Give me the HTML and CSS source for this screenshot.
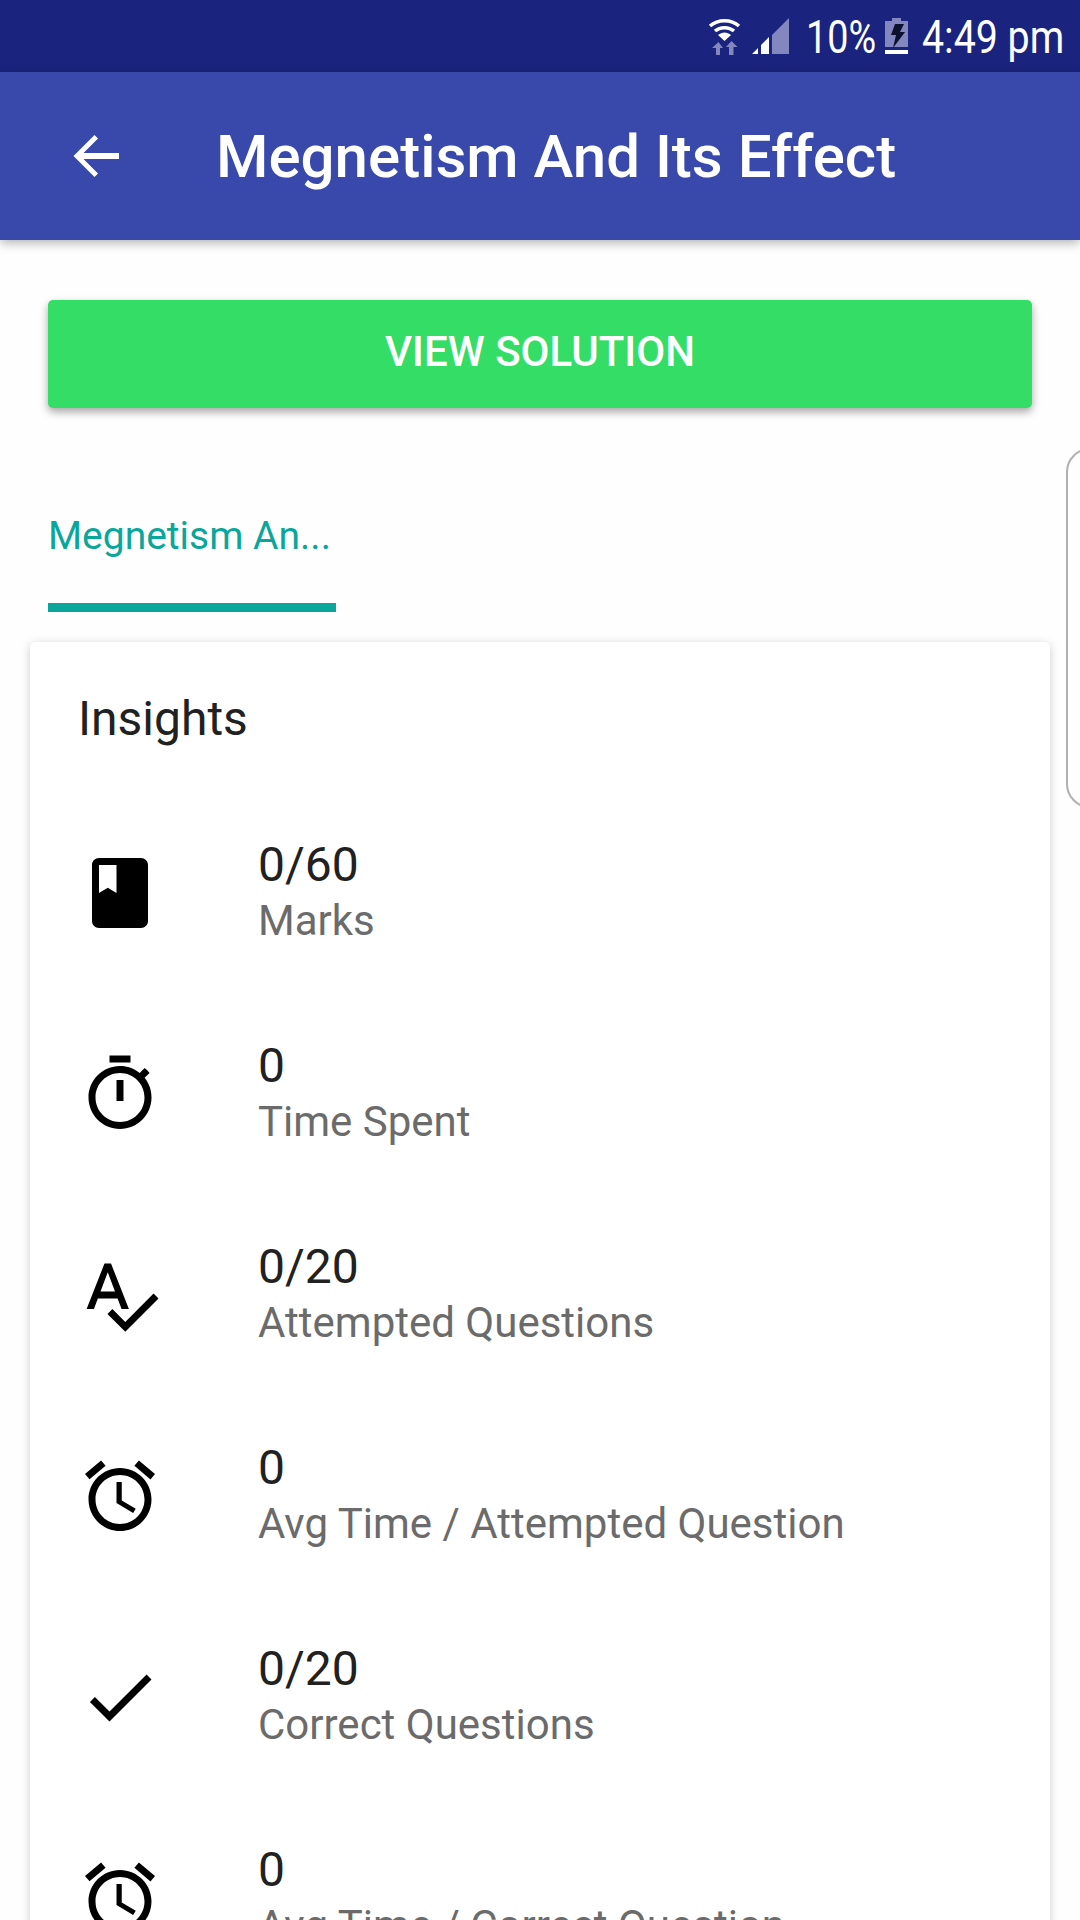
FILE: index.html
```html
<!DOCTYPE html>
<html lang="en">

<head>
    <meta charset="UTF-8">
    <meta name="viewport" content="width=device-width, initial-scale=1.0">
    <title>Megnetism And Its Effect</title>
    <link rel="stylesheet" href="styles.css">
</head>

<body>
    <div class="status-bar">
        <svg class="status-wifi" viewBox="0 0 33 37">
            <path class="arc" d="M2 8C10 1 23 1 31 8" />
            <path class="arc" d="M7 13C12 8.500 21 8.500 26 13" />
            <path class="on" d="M10 17C14 13.500 19 13.500 23 17L16.500 23z" />
            <path class="dim" d="M8 37v-7H4l6.500-6 0 0 4.500 6h-3v7zM21 37v-8h-3l5.500-6 6 6h-4v8z" />
        </svg>
        <svg class="status-signal" viewBox="0 0 37 36">
            <path class="dim" d="M20 36V17L37 0v36z" />
            <path class="on" d="M0 36l6-6v6zM9 36V27l8-8v17z" />
        </svg>
        <span class="status-text status-percent"><span>10%</span></span>
        <svg class="status-battery" viewBox="0 0 23 36">
            <path class="dim" d="M7 0h9v3h7v26H0V3h7z" />
            <path class="on" d="M0 32h23v4H0z" />
            <path class="bolt" d="M10 6h9l-4 8h5L8 30l3-13H6z" />
        </svg>
        <span class="status-text status-time"><span>4:49 pm</span></span>
    </div>

    <header class="app-bar">
        <svg class="back-icon" viewBox="0 0 48 48">
            <path d="M47 21H11.500L26 6.500 22.500 3 1.500 24l21 21 3.500-3.500L11.500 27H47z" />
        </svg>
        <h1>Megnetism And Its Effect</h1>
    </header>

    <main class="content">
        <button class="solution-btn" type="button">VIEW SOLUTION</button>

        <div class="tabs">
            <div class="tab">Megnetism An...</div>
        </div>
        <div class="next-card"></div>

        <section class="card">
            <h2>Insights</h2>

            <div class="row">
                <svg class="row-icon" viewBox="0 0 24 24">
                    <path d="M18 2H6c-1.100 0-2 .9-2 2v16c0 1.100.9 2 2 2h12c1.100 0 2-.9 2-2V4c0-1.100-.9-2-2-2zM6 4h5v8l-2.500-1.500L6 12V4z" />
                </svg>
                <div class="row-text">
                    <div class="row-value">0/60</div>
                    <div class="row-label">Marks</div>
                </div>
            </div>

            <div class="row">
                <svg class="row-icon" viewBox="0 0 24 24">
                    <path d="M15 1H9v2h6V1zm-4 13h2V8h-2v6zm8.030-6.610l1.420-1.420c-.43-.51-.9-.99-1.410-1.410l-1.420 1.420C16.070 4.740 14.120 4 12 4c-4.970 0-9 4.030-9 9s4.020 9 9 9 9-4.030 9-9c0-2.120-.74-4.070-1.970-5.610zM12 20c-3.870 0-7-3.130-7-7s3.130-7 7-7 7 3.130 7 7-3.130 7-7 7z" />
                </svg>
                <div class="row-text">
                    <div class="row-value">0</div>
                    <div class="row-label">Time Spent</div>
                </div>
            </div>

            <div class="row">
                <svg class="row-icon" viewBox="0 0 24 24">
                    <path d="M12.450 16h2.090L9.430 3H7.570L2.460 16h2.090l1.120-3h5.640l1.140 3zm-6.020-5L8.500 5.480 10.570 11H6.430zm15.160.59l-8.090 8.090L9.830 16l-1.410 1.410 5.090 5.090L23 13l-1.410-1.410z" />
                </svg>
                <div class="row-text">
                    <div class="row-value">0/20</div>
                    <div class="row-label">Attempted Questions</div>
                </div>
            </div>

            <div class="row">
                <svg class="row-icon" viewBox="0 0 24 24">
                    <path d="M22 5.720l-4.600-3.860-1.290 1.530 4.600 3.860L22 5.720zM7.880 3.390L6.600 1.860 2 5.710l1.290 1.530 4.590-3.850zM12.500 8H11v6l4.750 2.850.75-1.230-4-2.370V8zM12 4c-4.970 0-9 4.030-9 9s4.020 9 9 9c4.970 0 9-4.030 9-9s-4.030-9-9-9zm0 16c-3.870 0-7-3.130-7-7s3.130-7 7-7 7 3.130 7 7-3.130 7-7 7z" />
                </svg>
                <div class="row-text">
                    <div class="row-value">0</div>
                    <div class="row-label">Avg Time / Attempted Question</div>
                </div>
            </div>

            <div class="row">
                <svg class="row-icon" viewBox="0 0 24 24">
                    <path d="M9 16.170L4.830 12l-1.420 1.410L9 19 21 7l-1.410-1.410z" />
                </svg>
                <div class="row-text">
                    <div class="row-value">0/20</div>
                    <div class="row-label">Correct Questions</div>
                </div>
            </div>

            <div class="row">
                <svg class="row-icon" viewBox="0 0 24 24">
                    <path d="M22 5.720l-4.600-3.860-1.290 1.530 4.600 3.860L22 5.720zM7.880 3.390L6.600 1.860 2 5.710l1.290 1.530 4.590-3.850zM12.500 8H11v6l4.750 2.850.75-1.230-4-2.370V8zM12 4c-4.970 0-9 4.030-9 9s4.020 9 9 9c4.970 0 9-4.030 9-9s-4.030-9-9-9zm0 16c-3.870 0-7-3.130-7-7s3.130-7 7-7 7 3.130 7 7-3.130 7-7 7z" />
                </svg>
                <div class="row-text">
                    <div class="row-value">0</div>
                    <div class="row-label">Avg Time / Correct Question</div>
                </div>
            </div>
        </section>
    </main>
</body>

</html>
```

FILE: styles.css
```css
/* General Styles */
html,
body {
    height: 1920px;
    overflow: hidden;
}

body {
    margin: 0;
    font-family: 'Roboto', sans-serif;
    background-color: #fefefe;
    color: #212121;
}

/* Status bar */
.status-bar {
    height: 72px;
    padding-right: 17px;
    background-color: #1a237e;
    display: flex;
    align-items: center;
    justify-content: flex-end;
    box-sizing: border-box;
}

.status-bar .on {
    fill: #ffffff;
}

.status-bar .arc {
    fill: none;
    stroke: #ffffff;
    stroke-width: 3.500;
}

.status-bar .dim {
    fill: #8288bf;
}

.status-bar .bolt {
    fill: #0e1030;
}

.status-wifi {
    width: 33px;
    height: 37px;
    margin-right: 11px;
}

.status-signal {
    width: 37px;
    height: 36px;
    margin-right: 17px;
}

.status-battery {
    width: 23px;
    height: 36px;
    margin: 0 14px 0 11px;
}

/* the clock font is condensed, so the text is squeezed inside a fixed box */
.status-text {
    padding-top: 2px;
    font-size: 46px;
    line-height: 54px;
    color: #ffffff;
    white-space: nowrap;
}

.status-text span {
    display: inline-block;
    transform: scaleX(0.855);
    transform-origin: left center;
}

.status-percent {
    width: 68px;
}

.status-percent span {
    transform: scaleX(0.82);
}

.status-time {
    width: 141px;
}

/* App bar */
.app-bar {
    height: 168px;
    background-color: #3949ab;
    display: flex;
    align-items: center;
    box-shadow: 0 3px 10px rgba(0, 0, 0, 0.3);
    position: relative;
}

.back-icon {
    width: 48px;
    height: 48px;
    margin-left: 72px;
    fill: #ffffff;
}

.app-bar h1 {
    margin: 0 0 0 96px;
    font-size: 60px;
    font-weight: 500;
    color: #ffffff;
}

/* Content */
.content {
    position: relative;
    padding-top: 60px;
}

.solution-btn {
    display: block;
    width: 984px;
    height: 108px;
    margin: 0 48px;
    padding: 0 0 5px;
    background-color: #34de66;
    color: #ffffff;
    border: none;
    border-radius: 5px;
    box-shadow: 0 4px 8px rgba(0, 0, 0, 0.35);
    font-family: inherit;
    font-size: 42px;
    font-weight: 500;
}

.tabs {
    margin: 48px 0 30px 48px;
    height: 156px;
    display: flex;
}

.tab {
    width: 288px;
    height: 156px;
    box-sizing: border-box;
    padding-top: 57px;
    border-bottom: 9px solid #0aa69b;
    color: #0aa69b;
    font-size: 39px;
    line-height: 47px;
    white-space: nowrap;
}

.next-card {
    position: absolute;
    left: 1066px;
    top: 208px;
    width: 60px;
    height: 356px;
    border: 2px solid #b0b0b0;
    border-radius: 24px;
    background-color: #fefefe;
}

.card {
    margin: 0 30px;
    height: 1300px;
    padding-top: 49px;
    box-sizing: border-box;
    background-color: #ffffff;
    border-radius: 5px;
    box-shadow: 0 2px 10px rgba(0, 0, 0, 0.2);
}

.card h2 {
    margin: 0 0 45px 48px;
    font-size: 48px;
    line-height: 56px;
    font-weight: 400;
}

.row {
    height: 201px;
    display: flex;
    align-items: center;
}

.row-icon {
    width: 84px;
    height: 84px;
    margin-left: 48px;
    flex-shrink: 0;
    fill: #000000;
}

.row-text {
    margin-left: 96px;
}

.row-value {
    font-size: 48px;
    line-height: 56px;
}

.row-label {
    font-size: 42px;
    line-height: 56px;
    color: #6b6b6b;
}
```
